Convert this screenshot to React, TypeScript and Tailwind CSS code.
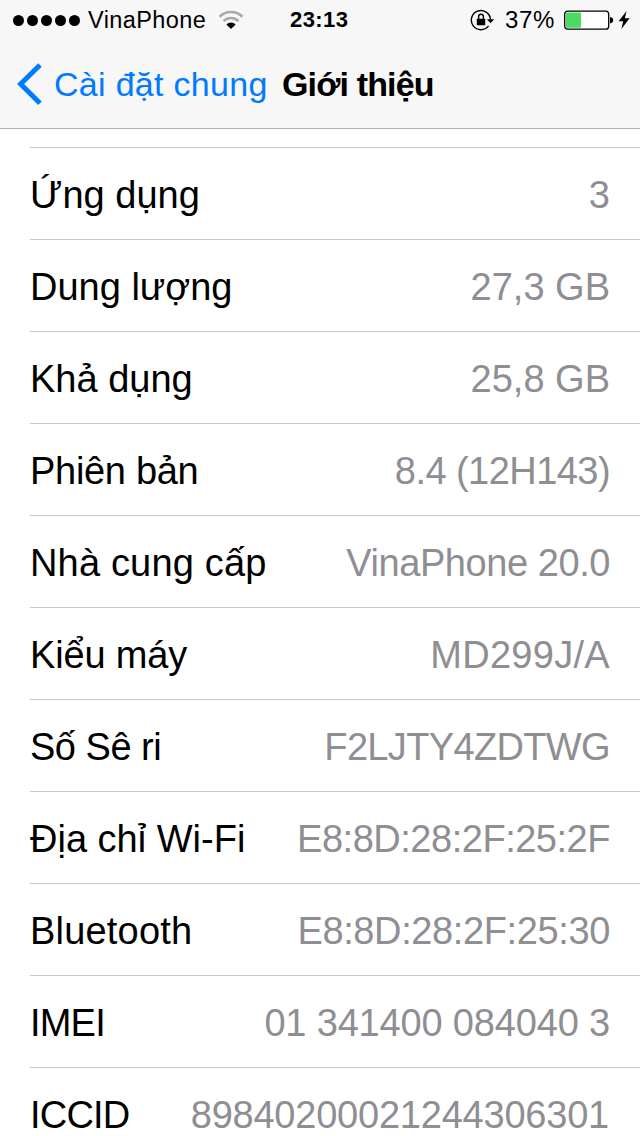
import React from 'react';

interface InfoRow {
  label: string;
  value: string;
  labelClass?: string;
  valueClass?: string;
}

const rows: InfoRow[] = [
  { label: 'Ứng dụng', value: '3' },
  { label: 'Dung lượng', value: '27,3 GB' },
  { label: 'Khả dụng', value: '25,8 GB' },
  { label: 'Phiên bản', value: '8.4 (12H143)', labelClass: 'tracking-[-0.3px]', valueClass: 'tracking-[-0.55px]' },
  { label: 'Nhà cung cấp', value: 'VinaPhone 20.0', labelClass: 'tracking-[0.17px]', valueClass: 'tracking-[-0.43px]' },
  { label: 'Kiểu máy', value: 'MD299J/A', labelClass: 'tracking-[-0.15px]', valueClass: 'tracking-[0.3px]' },
  { label: 'Số Sê ri', value: 'F2LJTY4ZDTWG', labelClass: 'tracking-[-0.5px]', valueClass: 'tracking-[-0.65px]' },
  { label: 'Địa chỉ Wi-Fi', value: 'E8:8D:28:2F:25:2F', valueClass: 'tracking-[-0.48px]' },
  { label: 'Bluetooth', value: 'E8:8D:28:2F:25:30', labelClass: 'tracking-[0.2px]', valueClass: 'tracking-[-0.38px]' },
  { label: 'IMEI', value: '01 341400 084040 3', labelClass: 'tracking-[-0.8px]', valueClass: 'tracking-[-0.17px]' },
  { label: 'ICCID', value: '89840200021244306301', labelClass: 'tracking-[-0.8px]', valueClass: 'tracking-[-0.22px] pr-px' },
];

const WifiIcon: React.FC = () => (
  <svg className="w-[26px] h-5 shrink-0" viewBox="0 0 26 20" fill="none">
    <path d="M1.6 6.7A16.2 16.2 0 0 1 24.4 6.7" stroke="#a9a9a9" strokeWidth="2.7" />
    <path d="M5.6 11.1A10.4 10.4 0 0 1 20.4 11.1" stroke="#a9a9a9" strokeWidth="2.7" />
    <path d="M8.4 14.4A6.5 6.5 0 0 1 17.6 14.4L13 19Z" fill="#000" />
  </svg>
);

const RotationLockIcon: React.FC = () => (
  <svg className="w-[25px] h-[22px] shrink-0" viewBox="0 0 25 22" fill="none">
    <path d="M18.6 16.9A9.6 9.6 0 1 1 20.5 10.4" stroke="#000" strokeWidth="1.4" />
    <path d="M16.9 10.2H24.2L20.5 14.2Z" fill="#000" />
    <rect x="6.8" y="9.7" width="8.4" height="6.6" rx="0.6" fill="#000" />
    <path d="M8.6 10V7.7A2.4 2.4 0 0 1 13.4 7.7V10" stroke="#000" strokeWidth="1.4" />
  </svg>
);

const BatteryIcon: React.FC = () => (
  <svg className="w-[50px] h-5 shrink-0" viewBox="0 0 50 20" fill="none">
    <rect x="0.7" y="1.2" width="44" height="18" rx="3" fill="#fff" stroke="#000" strokeWidth="1.3" />
    <rect x="2" y="2.6" width="15" height="15.2" rx="1" fill="#4cd964" />
    <path d="M46 7Q49.2 7.6 49.2 10.2T46 13.4Z" fill="#000" />
  </svg>
);

const BoltIcon: React.FC = () => (
  <svg className="w-3 h-[18px] shrink-0" viewBox="0 0 12 18">
    <path d="M8.6 0L0.6 10.2H5.2L3.4 18L11.6 7.2H6.8Z" fill="#000" />
  </svg>
);

const StatusBar: React.FC = () => (
  <div className="grid grid-cols-[277px_1fr_auto] items-center h-10 pl-[13px] pr-[10px] text-[24px] leading-10">
    <div className="flex items-center">
      <div className="flex gap-[3px]">
        {[0, 1, 2, 3, 4].map((dot) => (
          <span key={dot} className="w-[11px] h-[11px] rounded-full bg-black" />
        ))}
      </div>
      <span className="ml-2 w-[130px] text-[23.5px] tracking-[0.4px]">VinaPhone</span>
      <WifiIcon />
    </div>
    <span className="font-bold text-[22px] tracking-[0.4px]">23:13</span>
    <div className="flex items-center">
      <RotationLockIcon />
      <span className="ml-[10px] w-[51px] tracking-[0.6px] whitespace-nowrap">37%</span>
      <span className="ml-[8px]">
        <BatteryIcon />
      </span>
      <span className="ml-1">
        <BoltIcon />
      </span>
    </div>
  </div>
);

const NavBar: React.FC = () => (
  <div className="flex items-center h-[88px] pl-[17px] text-[34px] leading-[88px] whitespace-nowrap">
    <svg className="w-[25px] h-[42px] shrink-0" viewBox="0 0 25 42" fill="none">
      <path d="M23 2L3.6 21L23 40.2" stroke="#007aff" strokeWidth="5" />
    </svg>
    <span className="ml-3 w-[214px] text-[#007aff] tracking-[0.3px]">Cài đặt chung</span>
    <h1 className="ml-[14px] font-bold tracking-[-0.85px]">Giới thiệu</h1>
  </div>
);

const App: React.FC = () => {
  return (
    <div className="w-[640px] h-[1136px] overflow-hidden bg-white text-black font-['Liberation_Sans',Arial,sans-serif]">
      <header className="h-[129px] bg-[#f7f7f8] border-b border-[#b2b2b2]">
        <StatusBar />
        <NavBar />
      </header>

      <main className="pl-[30px] pt-[18px]">
        {rows.map((row) => (
          <div
            key={row.label}
            className="flex items-center justify-between h-[92px] pr-[30px] pt-1 border-t border-[#c8c7cc] text-[38px] whitespace-nowrap"
          >
            <span className={row.labelClass}>{row.label}</span>
            <span className={`text-[#8e8e93] ${row.valueClass ?? ''}`}>{row.value}</span>
          </div>
        ))}
      </main>
    </div>
  );
};

export default App;
